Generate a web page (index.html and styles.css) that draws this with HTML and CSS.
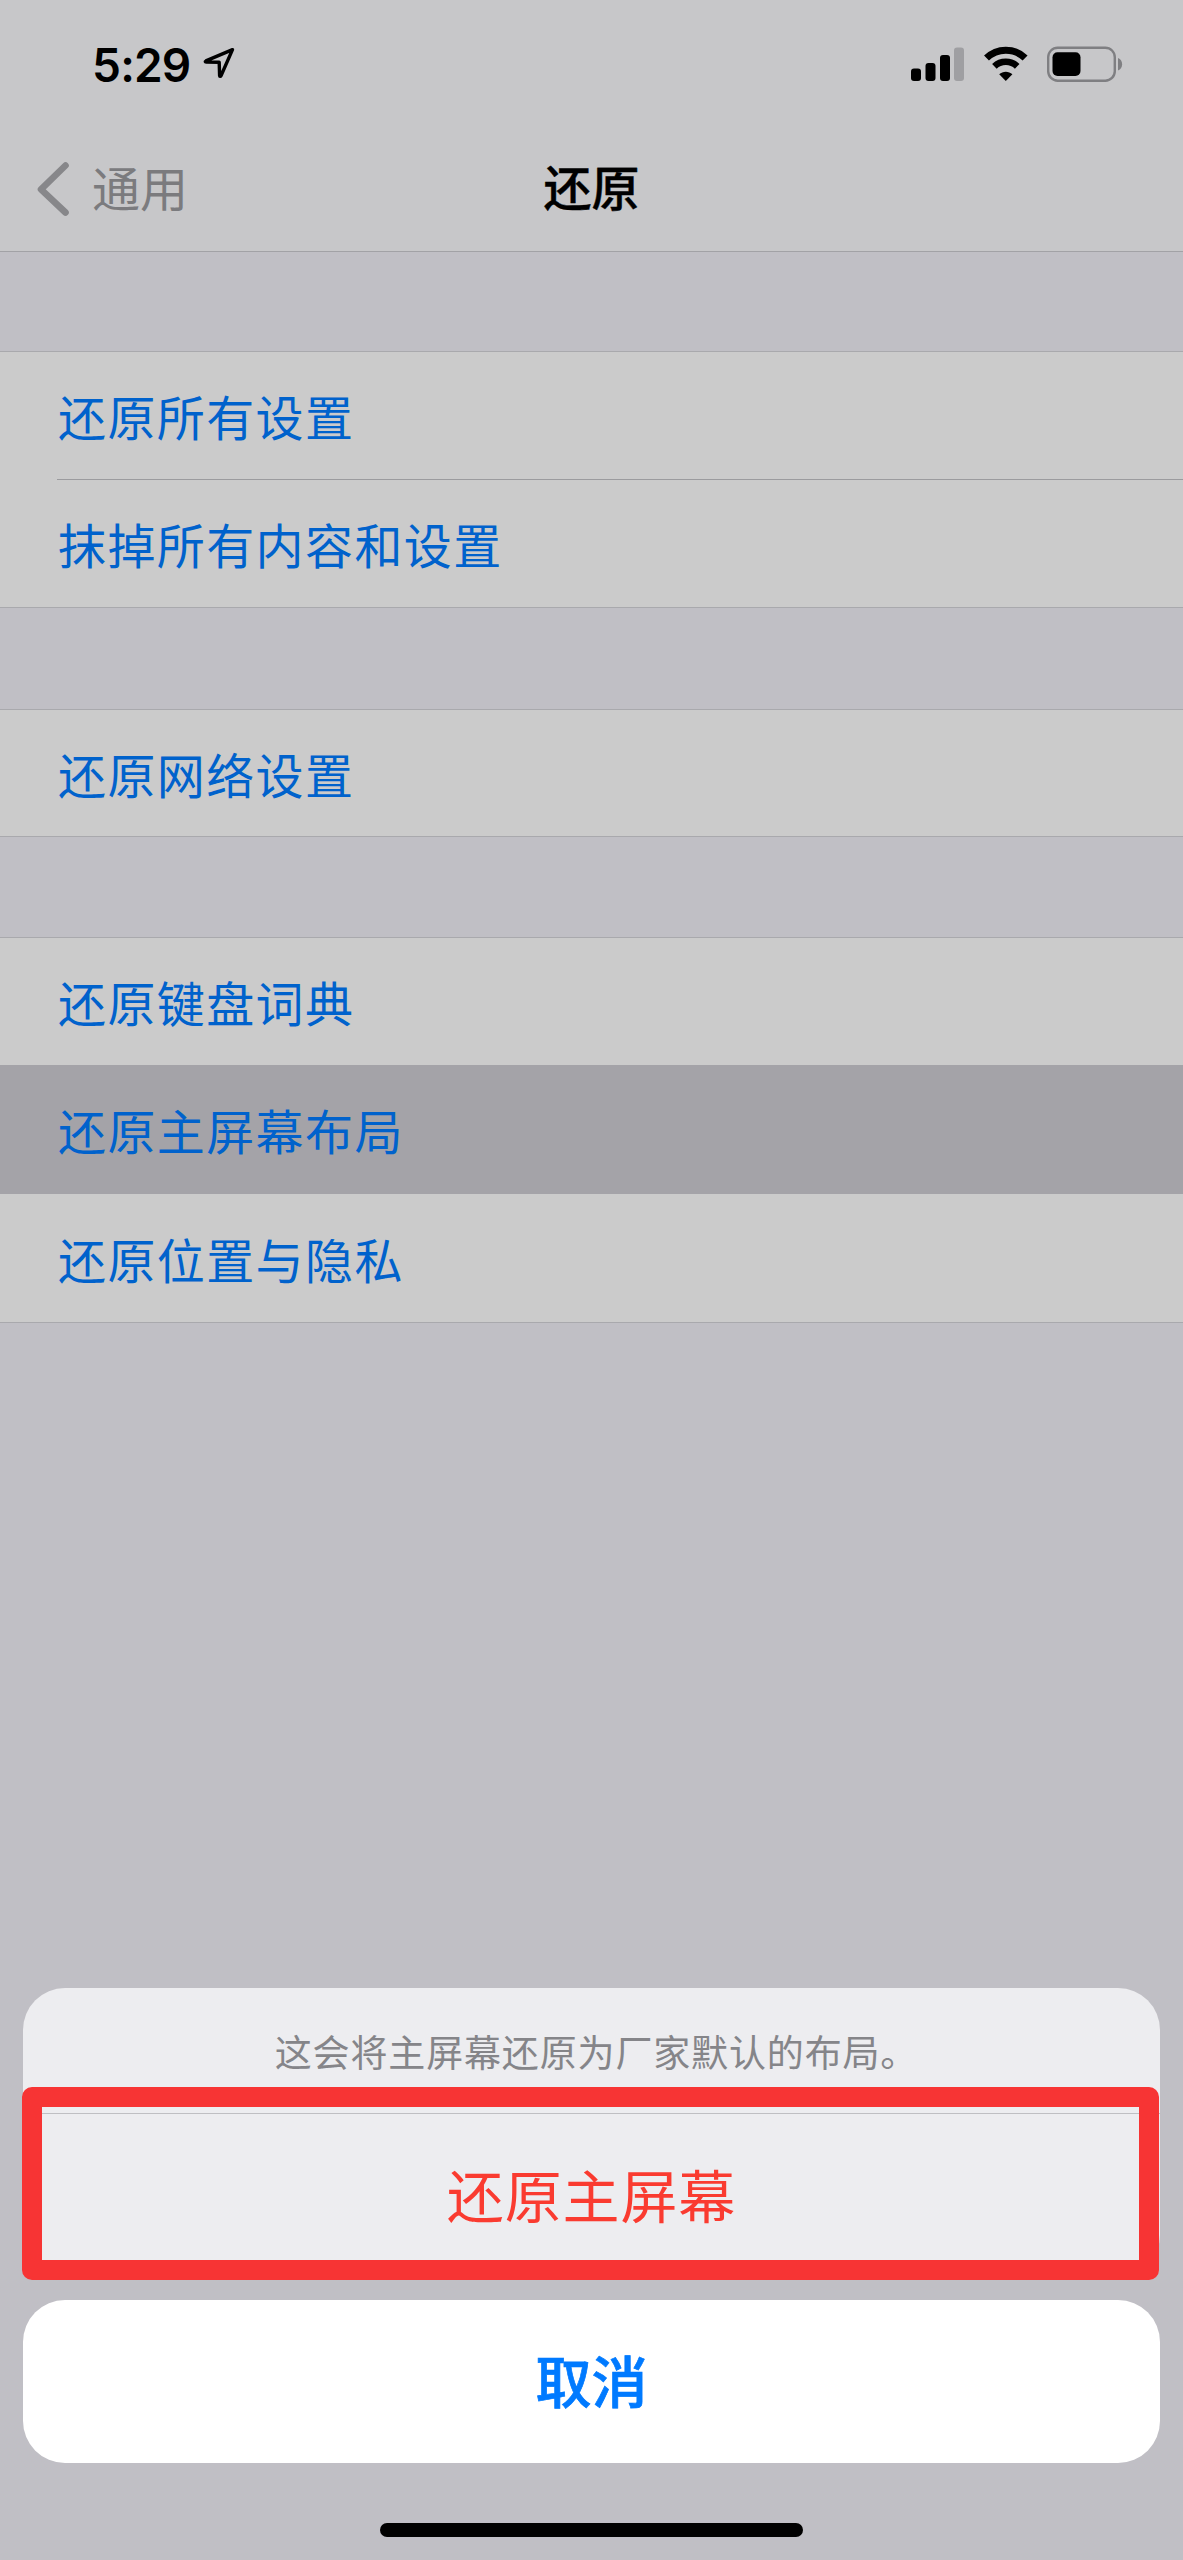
FILE: index.html
```html
<!DOCTYPE html>
<html lang="zh-CN">
<head>
<meta charset="utf-8">
<title>还原</title>
<link rel="stylesheet" href="styles.css">
</head>
<body>
<div class="phone">
  <header class="header">
    <div class="status-bar">
      <div class="status-left">
        <span class="time">5:29</span>
        <svg class="location" width="32" height="32" viewBox="0 0 32 32"><path d="M29.5 2.6 2.9 13.9c-1 .5-.8 1.2.2 1.2l13.1.2.4 13.2c.1 1.1.9 1.2 1.4.2z" fill="none" stroke="#000" stroke-width="3.4" stroke-linejoin="round"/></svg>
      </div>
      <div class="status-right">
        <svg width="53" height="36" viewBox="0 0 53 36">
          <rect x="0" y="22.5" width="10" height="12.5" rx="3"/>
          <rect x="14.5" y="17" width="10" height="18" rx="3"/>
          <rect x="29" y="9" width="10" height="26" rx="3"/>
          <rect x="43" y="1.5" width="10" height="33.5" rx="3" fill="#9f9fa2"/>
        </svg>
        <svg class="wifi" width="46" height="36" viewBox="0 0 46 36">
          <path d="M3.5 12.1a27.5 27.5 0 0 1 38.6 0" fill="none" stroke="#000" stroke-width="7"/>
          <path d="M11.4 20.3a16.5 16.5 0 0 1 22.8 0" fill="none" stroke="#000" stroke-width="6.6"/>
          <path d="M22.8 35 16.2 28.2c3.6-3.4 9.6-3.4 13.2 0z"/>
        </svg>
        <svg class="battery" width="76" height="36" viewBox="0 0 76 36">
          <rect x="1.2" y="1.7" width="66.6" height="33" rx="9.5" fill="none" stroke="#7f7f82" stroke-width="2.4"/>
          <rect x="5.5" y="6.2" width="28" height="23.8" rx="5"/>
          <path d="M71 12c5.500 2 5.500 10.400 0 12.400z" fill="#7f7f82"/>
        </svg>
      </div>
    </div>
    <nav class="nav-bar">
      <a class="back">
        <svg width="34" height="56" viewBox="0 0 34 56"><path d="M29.500 4.500 5 28.300 29.500 51.500" fill="none" stroke="#87878a" stroke-width="6.600" stroke-linecap="round" stroke-linejoin="round"/></svg>
        <span class="back-label">通用</span>
      </a>
      <h1 class="title">还原</h1>
      <span></span>
    </nav>
  </header>

  <main class="settings">
    <ul class="group">
      <li class="row">还原所有设置</li>
      <li class="row divided">抹掉所有内容和设置</li>
    </ul>
    <ul class="group">
      <li class="row single">还原网络设置</li>
    </ul>
    <ul class="group">
      <li class="row">还原键盘词典</li>
      <li class="row pressed">还原主屏幕布局</li>
      <li class="row">还原位置与隐私</li>
    </ul>
  </main>

  <section class="sheet">
    <div class="sheet-card">
      <p class="message">这会将主屏幕还原为厂家默认的布局。</p>
      <div class="action">还原主屏幕</div>
      <div class="highlight"></div>
    </div>
    <div class="cancel">取消</div>
  </section>
  <div class="home-indicator"></div>
</div>
</body>
</html>
```
FILE: styles.css
```css
* {
  box-sizing: border-box;
}

body {
  margin: 0;
  background: #c0bfc5;
  font-family: "Noto Sans CJK SC", sans-serif;
}

.phone {
  display: flex;
  flex-direction: column;
  width: 1183px;
  height: 2560px;
  background: #c0bfc5;
}

.header {
  height: 252px;
  background: #c7c7c9;
  border-bottom: 1px solid #a2a2a6;
}

.status-bar {
  display: flex;
  justify-content: space-between;
  height: 126px;
  padding: 46px 60px 0 92px;
}

.status-left,
.status-right {
  display: flex;
  align-items: flex-start;
}

.time {
  width: 98px;
  font: 600 46px/38px Inter, sans-serif;
  letter-spacing: -0.8px;
  white-space: nowrap;
}

.location {
  margin: 1px 0 0 13px;
}

.wifi {
  margin-left: 19px;
}

.battery {
  margin-left: 18px;
}

.nav-bar {
  display: grid;
  grid-template-columns: 1fr auto 1fr;
  align-items: center;
  height: 125px;
  padding: 0 36px;
}

.back {
  display: flex;
  align-items: center;
  gap: 22px;
  color: #7b7b7e;
  font-size: 48px;
  line-height: 70px;
}

.back-label {
  padding-bottom: 6px;
}

.title {
  margin: 0;
  padding-bottom: 7px;
  font-size: 48px;
  font-weight: 500;
  line-height: 70px;
  -webkit-text-stroke: 0.4px #000;
}

.settings {
  flex: 1;
}

.group {
  margin: 99px 0 0;
  padding: 0;
  list-style: none;
  background: #cbcbcb;
  border-top: 1px solid #a9a9ad;
  border-bottom: 1px solid #a9a9ad;
}

.group:nth-child(2) {
  margin-top: 101px;
}

.group:nth-child(3) {
  margin-top: 100px;
}

.row {
  display: flex;
  align-items: center;
  height: 128px;
  padding: 0 0 1px 58px;
  color: #0062cc;
  font-size: 48px;
  letter-spacing: 1.4px;
  line-height: 70px;
}

.row:first-child {
  height: 127px;
}

.row.single {
  height: 126px;
}

.divided {
  position: relative;
}

.divided::before {
  content: "";
  position: absolute;
  top: 0;
  left: 57px;
  right: 0;
  height: 1px;
  background: #9b9b9e;
}

.pressed {
  height: 129px;
  background: #a4a3a8;
}

.sheet {
  display: flex;
  flex-direction: column;
  gap: 23px;
  margin: 0 23px;
}

.sheet-card {
  position: relative;
  height: 289px;
  border-radius: 42px;
  background: #ededf0;
  text-align: center;
}

.message {
  height: 126px;
  margin: 0;
  padding-left: 10px;
  border-bottom: 1px solid #bfbfc3;
  color: #858589;
  font-size: 37px;
  letter-spacing: 0.85px;
  line-height: 126px;
}

.action {
  height: 163px;
  color: #fa3b30;
  font-size: 57px;
  letter-spacing: 0.9px;
  line-height: 158px;
}

.highlight {
  position: absolute;
  top: 99px;
  left: -1px;
  right: 1px;
  height: 193px;
  border: 20px solid #f73434;
  border-radius: 10px;
}

.cancel {
  height: 163px;
  border-radius: 42px;
  background: #fff;
  color: #007aff;
  font-size: 56px;
  font-weight: 500;
  line-height: 157px;
  text-align: center;
  -webkit-text-stroke: 0.7px #007aff;
}

.home-indicator {
  width: 423px;
  height: 14px;
  margin: 60px auto 23px;
  border-radius: 7px;
  background: #000;
}
```
